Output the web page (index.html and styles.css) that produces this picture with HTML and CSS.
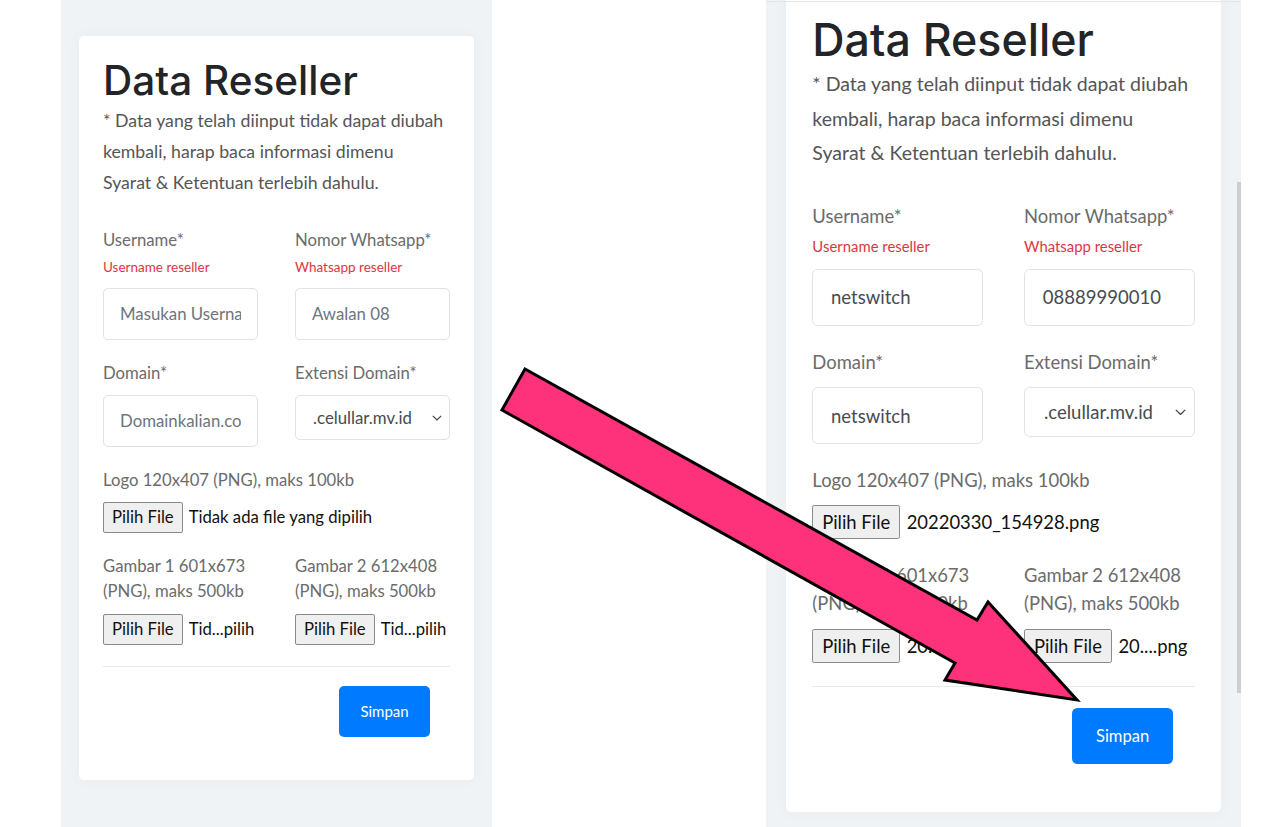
FILE: index.html
```html
<!DOCTYPE html>
<html lang="id">
<head>
<meta charset="utf-8">
<title>Data Reseller</title>
<link rel="stylesheet" href="styles.css">
</head>
<body>
<main class="stage">
  <section class="panel">
    <div class="card">
      <h1 class="title">Data Reseller</h1>
      <p class="note">* Data yang telah diinput tidak dapat diubah<br>kembali, harap baca informasi dimenu<br>Syarat &amp; Ketentuan terlebih dahulu.</p>
      <form class="form">
        <div class="row">
          <div class="field">
            <label class="label">Username*</label>
            <small class="hint">Username reseller</small>
            <input class="input control" type="text" placeholder="Masukan Username">
          </div>
          <div class="field">
            <label class="label">Nomor Whatsapp*</label>
            <small class="hint">Whatsapp reseller</small>
            <input class="input control" type="text" placeholder="Awalan 08">
          </div>
        </div>
        <div class="row">
          <div class="field">
            <label class="label">Domain*</label>
            <input class="input control" type="text" placeholder="Domainkalian.com">
          </div>
          <div class="field">
            <label class="label">Extensi Domain*</label>
            <div class="select control">
              <span class="select-text">.celullar.mv.id</span>
              <svg class="chevron" width="10" height="6" viewBox="0 0 10 6"><path d="M0.8 0.8 L5 5 L9.2 0.8" fill="none" stroke="#444" stroke-width="1.2"/></svg>
            </div>
          </div>
        </div>
        <div class="field">
          <label class="label">Logo 120x407 (PNG), maks 100kb</label>
          <div class="file control"><span class="file-btn">Pilih File</span><span class="file-name">Tidak ada file yang dipilih</span></div>
        </div>
        <div class="row">
          <div class="field">
            <label class="label label-2">Gambar 1 601x673<br>(PNG), maks 500kb</label>
            <div class="file control"><span class="file-btn">Pilih File</span><span class="file-name">Tid...pilih</span></div>
          </div>
          <div class="field">
            <label class="label label-2">Gambar 2 612x408<br>(PNG), maks 500kb</label>
            <div class="file control"><span class="file-btn">Pilih File</span><span class="file-name">Tid...pilih</span></div>
          </div>
        </div>
      </form>
      <hr class="divider">
      <div class="actions"><button class="btn" type="button">Simpan</button></div>
    </div>
  </section>

  <section class="panel panel-right">
    <div class="card">
      <h1 class="title">Data Reseller</h1>
      <p class="note">* Data yang telah diinput tidak dapat diubah<br>kembali, harap baca informasi dimenu<br>Syarat &amp; Ketentuan terlebih dahulu.</p>
      <form class="form">
        <div class="row">
          <div class="field">
            <label class="label">Username*</label>
            <small class="hint">Username reseller</small>
            <input class="input control" type="text" value="netswitch">
          </div>
          <div class="field">
            <label class="label">Nomor Whatsapp*</label>
            <small class="hint">Whatsapp reseller</small>
            <input class="input control" type="text" value="08889990010">
          </div>
        </div>
        <div class="row">
          <div class="field">
            <label class="label">Domain*</label>
            <input class="input control" type="text" value="netswitch">
          </div>
          <div class="field">
            <label class="label">Extensi Domain*</label>
            <div class="select control">
              <span class="select-text">.celullar.mv.id</span>
              <svg class="chevron" width="10" height="6" viewBox="0 0 10 6"><path d="M0.8 0.8 L5 5 L9.2 0.8" fill="none" stroke="#444" stroke-width="1.2"/></svg>
            </div>
          </div>
        </div>
        <div class="field">
          <label class="label">Logo 120x407 (PNG), maks 100kb</label>
          <div class="file control"><span class="file-btn">Pilih File</span><span class="file-name">20220330_154928.png</span></div>
        </div>
        <div class="row">
          <div class="field">
            <label class="label label-2">Gambar 1 601x673<br>(PNG), maks 500kb</label>
            <div class="file control"><span class="file-btn">Pilih File</span><span class="file-name">20....png</span></div>
          </div>
          <div class="field">
            <label class="label label-2">Gambar 2 612x408<br>(PNG), maks 500kb</label>
            <div class="file control"><span class="file-btn">Pilih File</span><span class="file-name">20....png</span></div>
          </div>
        </div>
      </form>
      <hr class="divider">
      <div class="actions"><button class="btn" type="button">Simpan</button></div>
    </div>
    <div class="scroll-thumb"></div>
  </section>

  <svg class="arrow" width="1280" height="827" viewBox="0 0 1280 827">
    <polygon points="525,369 977,620 988,602 1077,700 945,680 955,663 502,410" fill="#fe327a" stroke="#000" stroke-width="3" stroke-linejoin="miter"/>
  </svg>
</main>
</body>
</html>
```

FILE: styles.css
```css
* { box-sizing: border-box; }

html, body {
  margin: 0;
  height: 100%;
}

body {
  background: #ffffff;
  font-family: Lato, "Liberation Sans", sans-serif;
  overflow: hidden;
}

.stage {
  position: relative;
  display: flex;
  align-items: flex-start;
  gap: 274px;
  padding-left: 61px;
  height: 827px;
}

.panel {
  width: 431px;
  height: 827px;
  background: #eff3f6;
  flex: none;
}

.panel-right {
  position: relative;
  zoom: 1.104;
  width: 430.5px;
  height: 750px;
  overflow: hidden;
}

.panel-right::after {
  content: "";
  position: absolute;
  left: 0;
  right: 0;
  top: 0.5px;
  height: 1px;
  background: #e2e6e9;
}

.card {
  margin: 36px 18px 0;
  background: #ffffff;
  border-radius: 5px;
  padding: 24px 24px 43px;
  box-shadow: 0 0 18px rgba(30, 50, 70, 0.03);
}

.panel-right .card {
  margin-top: -8px;
}

.title {
  margin: -3px 0 0;
  font-family: Inter, "Noto Sans", sans-serif;
  font-weight: 500;
  font-size: 40.5px;
  line-height: 48px;
  color: #222428;
}

.note {
  margin: 0;
  font-size: 17.7px;
  line-height: 31px;
  color: #555555;
  white-space: nowrap;
}

.form {
  margin-top: 29.5px;
  display: flex;
  flex-direction: column;
  gap: 21px;
}

.row {
  display: grid;
  grid-template-columns: 1fr 1fr;
  column-gap: 37px;
}

.field {
  display: flex;
  flex-direction: column;
  min-width: 0;
}

.label {
  font-size: 16.7px;
  line-height: 24px;
  color: #6b6b6b;
  white-space: nowrap;
}

.label-2 {
  line-height: 25px;
}

.hint {
  margin-top: 5px;
  margin-bottom: 1px;
  font-size: 13.5px;
  line-height: 20px;
  color: #dc3545;
}

.control {
  margin-top: 10px;
}

.input {
  display: block;
  width: 100%;
  height: 52px;
  border: 1px solid #dfe2e6;
  border-radius: 5px;
  padding: 0 16px;
  font-family: Lato, "Liberation Sans", sans-serif;
  font-size: 16.8px;
  color: #474b50;
  background: #fff;
  outline: none;
}

.input::placeholder {
  color: #6c757d;
}

.select {
  position: relative;
  display: flex;
  align-items: center;
  height: 45px;
  border: 1px solid #dfe2e6;
  border-radius: 5px;
  padding: 0 32px 0 12px;
  font-size: 16.8px;
  color: #474b50;
  background: #fff;
}

.select-text {
  flex: 1;
  text-align: center;
  white-space: nowrap;
}

.chevron {
  position: absolute;
  right: 7px;
  top: 19px;
}

.file {
  display: flex;
  align-items: center;
  height: 31px;
  white-space: nowrap;
}

.file-btn {
  display: inline-flex;
  align-items: center;
  height: 31px;
  padding: 0 8px;
  background: #efefef;
  border: 1px solid #8a8a8a;
  border-radius: 2px;
  font-size: 16.7px;
  color: #111;
}

.file-name {
  margin-left: 6px;
  font-size: 16.7px;
  color: #111;
}

.divider {
  margin: 21px 0 19px;
  border: 0;
  border-top: 1px solid #e7eaed;
}

.actions {
  display: flex;
  justify-content: flex-end;
  padding-right: 20px;
}

.btn {
  width: 91px;
  height: 51px;
  border: 0;
  border-radius: 5px;
  background: #007bff;
  color: #ffffff;
  font-family: Lato, "Liberation Sans", sans-serif;
  font-size: 15px;
}

.scroll-thumb {
  position: absolute;
  right: 0;
  top: 165px;
  width: 3.6px;
  height: 463px;
  background: #cbcfd3;
}

.arrow {
  position: absolute;
  left: 0;
  top: 0;
  pointer-events: none;
}
```
